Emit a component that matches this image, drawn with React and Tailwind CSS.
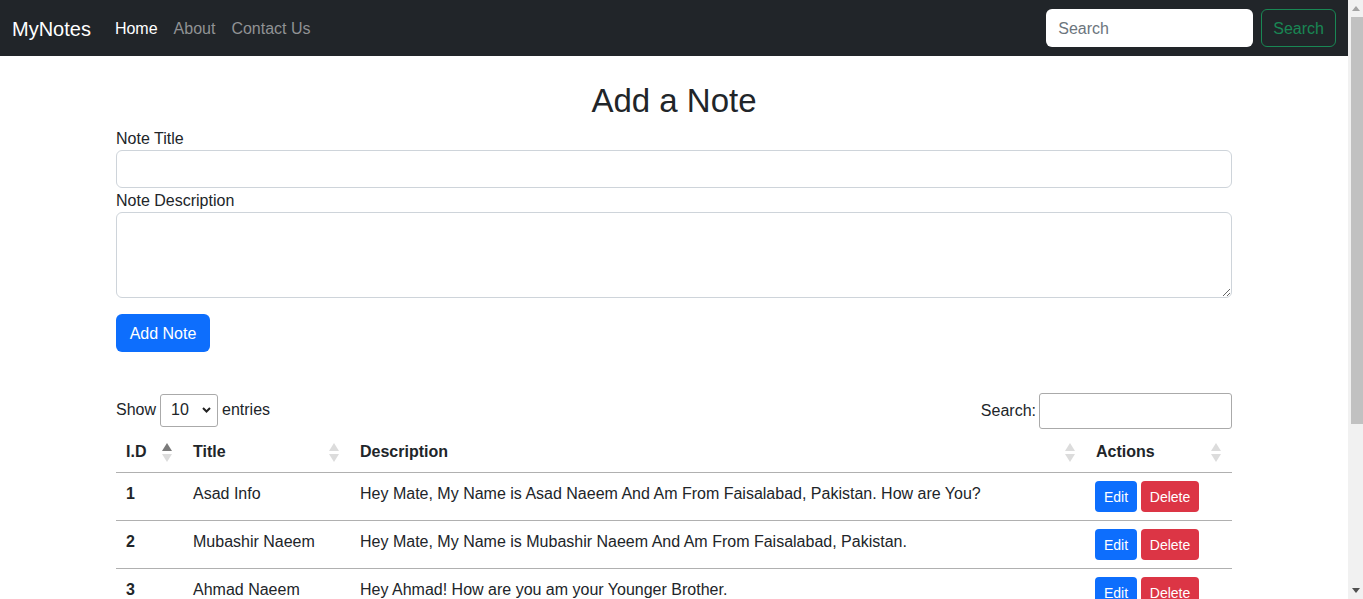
import React from "react";

const notes = [
  { id: 1, title: "Asad Info", desc: "Hey Mate, My Name is Asad Naeem And Am From Faisalabad, Pakistan. How are You?" },
  { id: 2, title: "Mubashir Naeem", desc: "Hey Mate, My Name is Mubashir Naeem And Am From Faisalabad, Pakistan." },
  { id: 3, title: "Ahmad Naeem", desc: "Hey Ahmad! How are you am your Younger Brother." },
];

const SortIcon = ({ asc }) => (
  <svg width="10" height="19" viewBox="0 0 10 19" className="shrink-0">
    <path d="M5 0 L10 8 L0 8 Z" fill={asc ? "#7a7a7a" : "#dcdcdc"} />
    <path d="M5 19 L10 11 L0 11 Z" fill="#dcdcdc" />
  </svg>
);

const HeadCell = ({ label, asc, width }) => (
  <th className={`${width} pl-[10px] pr-[11px] py-2 text-left font-bold border-b border-[#b0b0b0]`}>
    <div className="flex items-center justify-between">
      <span>{label}</span>
      <SortIcon asc={asc} />
    </div>
  </th>
);

// fake window scrollbar, the page is taller than the viewport
const Scrollbar = () => (
  <div className="w-[15px] h-screen bg-[#f1f1f1] flex flex-col items-end shrink-0">
    <div className="w-full h-[17px] flex items-center justify-center">
      <svg width="8" height="5" viewBox="0 0 8 5">
        <path d="M4 0 L8 5 L0 5 Z" fill="#a3a3a3" />
      </svg>
    </div>
    <div className="w-[12px] h-[407px] bg-[#c1c1c1]" />
    <div className="flex-1" />
    <div className="w-full h-[17px] flex items-center justify-center">
      <svg width="8" height="5" viewBox="0 0 8 5">
        <path d="M0 0 L8 0 L4 5 Z" fill="#505050" />
      </svg>
    </div>
  </div>
);

const App = () => {
  return (
    <div
      className="h-screen overflow-hidden flex bg-white text-[#212529] text-base leading-6"
      style={{ fontFamily: '"Segoe UI", "Liberation Sans", Arial, sans-serif' }}
    >
      <div className="flex-1 min-w-0 h-screen overflow-hidden">
        {/* navbar */}
        <nav className="h-14 bg-[#212529] flex items-center justify-between px-3">
          <div className="flex items-center pt-[2px]">
            <a className="text-xl text-white mr-4">MyNotes</a>
            <a className="px-2 text-white">Home</a>
            <a className="px-2 text-[#909294]">About</a>
            <a className="px-2 text-[#909294]">Contact Us</a>
          </div>
          <div className="flex items-center">
            <input
              placeholder="Search"
              className="w-[207px] h-[38px] bg-white rounded-md px-3 pt-[2px] mr-2 placeholder:text-[#6c757d] outline-none"
            />
            <button className="h-[38px] px-[11px] pt-[2px] rounded-md border border-[#198754] text-[#198754]">Search</button>
          </div>
        </nav>

        <div className="w-[1116px] mx-auto mt-6">
          <h2 className="text-[33px] leading-[38px] pt-[2px] font-medium text-center mb-[6px]">Add a Note</h2>

          <label className="block pt-[1px] h-6">Note Title</label>
          <input className="w-full h-[38px] border border-[#ced4da] rounded-md px-3 outline-none" />

          <label className="block pt-[1px] h-6">Note Description</label>
          <textarea className="block w-full h-[86px] border border-[#ced4da] rounded-md px-3 py-1.5 outline-none mb-4" />

          <button className="h-[38px] w-[94px] pt-[2px] rounded-md bg-[#0d6efd] text-white">Add Note</button>

          {/* table controls */}
          <div className="flex items-start justify-between mt-10">
            <div className="flex items-center h-[34px] pt-[2px]">
              <span>Show</span>
              <div className="mx-1 flex items-center justify-between w-[58px] h-[33px] border border-[#aaa] rounded-[3px] pl-2.5 pr-1.5">
                <span>10</span>
                <svg width="9" height="6" viewBox="0 0 9 6">
                  <path d="M1 1 L4.5 4.5 L8 1" fill="none" stroke="#222" strokeWidth="2" />
                </svg>
              </div>
              <span>entries</span>
            </div>
            <div className="flex items-center pt-[1px]">
              <span>Search:</span>
              <input className="ml-[3px] w-[193px] h-9 border border-[#aaa] rounded-[3px] px-1.5 outline-none" />
            </div>
          </div>

          <table className="w-full border-collapse mt-[3px]">
            <thead>
              <tr>
                <HeadCell label="I.D" asc width="w-[67px]" />
                <HeadCell label="Title" width="w-[167px]" />
                <HeadCell label="Description" width="w-[736px]" />
                <HeadCell label="Actions" width="w-[146px]" />
              </tr>
            </thead>
            <tbody>
              {notes.map((n, i) => (
                <tr key={n.id} className={i > 0 ? "border-t border-[#b0b0b0]" : ""}>
                  <td className="px-[10px] pt-[9px] pb-[7px] align-top font-bold">{n.id}</td>
                  <td className="px-[10px] pt-[9px] pb-[7px] align-top">{n.title}</td>
                  <td className="px-[10px] pt-[9px] pb-[7px] align-top">{n.desc}</td>
                  <td className="px-[9px] py-2 align-top">
                    <div className="flex gap-1">
                      <button className="h-[31px] w-[42px] pt-[1px] rounded bg-[#0d6efd] text-white text-sm">Edit</button>
                      <button className="h-[31px] w-[58px] pt-[1px] rounded bg-[#dc3545] text-white text-sm">Delete</button>
                    </div>
                  </td>
                </tr>
              ))}
            </tbody>
          </table>
          <div className="flex justify-between py-3 border-t border-[#b0b0b0]">
            <span>Showing 1 to 3 of 3 entries</span>
            <span className="text-[#666]">Previous 1 Next</span>
          </div>
        </div>
      </div>
      <Scrollbar />
    </div>
  );
};

export default App;
